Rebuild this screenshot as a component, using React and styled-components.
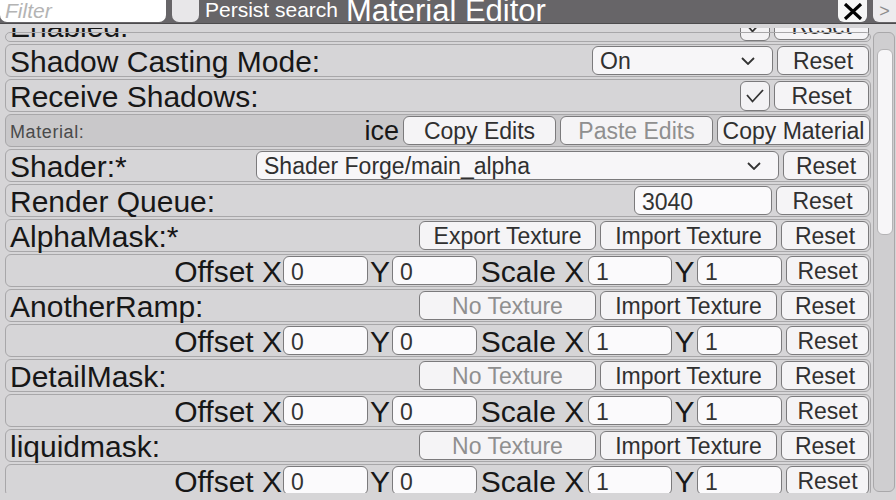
import React from 'react';
import styled, { createGlobalStyle } from 'styled-components';

const GlobalStyle = createGlobalStyle`
  html, body { margin: 0; padding: 0; background: #d6d5d7; }
  body { font-family: "Liberation Sans", Arial, sans-serif; }
  * { box-sizing: border-box; }
`;

const Window = styled.div`
  width: 896px;
  height: 500px;
  overflow: hidden;
  background: #d6d5d7;
  display: flex;
  flex-direction: column;
`;

const TopBar = styled.div`
  height: 24px;
  flex: none;
  background: #676568;
  border-bottom: 1px solid #4c4b4d;
  display: flex;
  align-items: flex-start;
`;

const FilterInput = styled.input`
  width: 166px;
  height: 22px;
  flex: none;
  border: none;
  border-radius: 0 0 7px 7px;
  background: #ffffff;
  padding: 0 0 0 5px;
  margin: 0;
  font: italic 21px "Liberation Sans", Arial, sans-serif;
  color: #333;
  outline: none;
  &::placeholder { color: #b4b4b4; font-style: italic; }
`;

const PersistBox = styled.div`
  width: 27px;
  height: 22px;
  margin-left: 6px;
  flex: none;
  background: #e8e7e9;
  border-radius: 0 0 7px 7px;
`;

const PersistLabel = styled.span`
  margin-left: 6px;
  color: #ffffff;
  font-size: 21px;
  line-height: 19px;
  white-space: nowrap;
`;

const Title = styled.span`
  margin-left: 8px;
  color: #ffffff;
  font-size: 31px;
  line-height: 21px;
  white-space: nowrap;
`;

const Fill = styled.div`
  flex: 1;
`;

const CloseButton = styled.div`
  width: 29px;
  height: 22px;
  flex: none;
  background: #f6f6f6;
  border-radius: 0 0 6px 6px;
  display: flex;
  align-items: center;
  justify-content: center;
  margin-right: 6px;
`;

const MoreButton = styled.div`
  width: 23px;
  height: 22px;
  flex: none;
  background: #edecee;
  border-radius: 0 0 0 6px;
  color: #8c8c8c;
  font-size: 18px;
  display: flex;
  align-items: center;
  justify-content: center;
`;

const Viewport = styled.div`
  height: 465px;
  margin-top: 4px;
  flex: none;
  display: flex;
  align-items: flex-start;
  overflow: hidden;
`;

const List = styled.div`
  flex: 1;
  min-width: 0;
  padding-left: 5px;
  margin-top: -19px;
  display: flex;
  flex-direction: column;
  gap: 2px;
`;

const ScrollCol = styled.div`
  width: 25px;
  height: 100%;
  flex: none;
  padding: 4px 1px 1px 2px;
`;

const Track = styled.div`
  height: 100%;
  border: 1px solid #a9a8aa;
  border-radius: 6px;
  background: #cfced0;
  padding: 16px 0 0 3px;
`;

const Thumb = styled.div`
  width: 16px;
  height: 186px;
  background: #f7f6f8;
  border: 1px solid #b4b3b5;
  border-radius: 6px;
`;

const Row = styled.div`
  position: relative;
  height: 33px;
  flex: none;
  border: 1px solid ${p => (p.$cut ? 'transparent' : '#a8a7a9')};
  border-radius: 6px;
  padding: 0 ${p => p.$pr ?? 1}px 0 4px;
  display: flex;
  align-items: center;
  gap: ${p => p.$gap ?? 4}px;
  background: ${p => (p.$dark ? '#c9c8ca' : 'transparent')};
  ${p =>
    p.$cut &&
    `&::before {
      content: "";
      position: absolute;
      left: -1px;
      right: -1px;
      top: 22px;
      bottom: -1px;
      border: 1px solid #a8a7a9;
      border-radius: 5px;
      pointer-events: none;
    }`}
`;

const Label = styled.span`
  font-size: 30px;
  line-height: 31px;
  padding-top: 1px;
  color: #171717;
  white-space: nowrap;
  margin-right: auto;
`;

const SmallLabel = styled.span`
  font-size: 18px;
  letter-spacing: 0.6px;
  padding-top: 3px;
  color: #4a4a4a;
  white-space: nowrap;
  margin-right: auto;
`;

const BigText = styled.span`
  font-size: ${p => p.$size ?? 30}px;
  line-height: 31px;
  padding-top: 1px;
  color: #171717;
  white-space: nowrap;
  flex: none;
  text-align: center;
  width: ${p => (p.$w ? `${p.$w}px` : 'auto')};
  margin-right: ${p => p.$mr ?? 0}px;
`;

const Button = styled.button`
  width: ${p => p.$w}px;
  height: 29px;
  flex: none;
  margin: 0 0 0 ${p => p.$ml ?? 0}px;
  padding: 2px 0 0 0;
  border: 1px solid #7b7a7c;
  border-radius: 6px;
  background: #f5f4f6;
  font: 23px "Liberation Sans", Arial, sans-serif;
  line-height: 25px;
  color: ${p => (p.$disabled ? '#8f8f8f' : '#303030')};
  text-align: center;
  white-space: nowrap;
`;

const Dropdown = styled.div`
  width: ${p => p.$w}px;
  height: 29px;
  flex: none;
  border: 1px solid #7b7a7c;
  border-radius: 6px;
  background: #f7f6f8;
  display: flex;
  align-items: center;
  justify-content: space-between;
  padding: 2px 17px 0 7px;
  font-size: 23px;
  line-height: 25px;
  color: #303030;
  white-space: nowrap;
`;

const TextField = styled.input`
  width: ${p => p.$w}px;
  height: 29px;
  flex: none;
  margin: 0;
  border: 1px solid #7b7a7c;
  border-radius: 6px;
  background: #fbfafc;
  padding: 3px 0 0 7px;
  font: 23px "Liberation Sans", Arial, sans-serif;
  line-height: 24px;
  color: #333;
  outline: none;
`;

const CheckBox = styled.div`
  width: 30px;
  height: 30px;
  flex: none;
  border: 1px solid #7b7a7c;
  border-radius: 6px;
  background: #f3f2f4;
  display: flex;
  align-items: center;
  justify-content: center;
`;

const Chevron = () => (
  <svg width="14" height="8" viewBox="0 0 14 8" style={{ marginTop: -2 }}>
    <polyline points="1,1 7,7 13,1" fill="none" stroke="#333" strokeWidth="1.8" />
  </svg>
);

const Check = () => (
  <svg width="18" height="14" viewBox="0 0 18 14">
    <polyline points="1,6 6.5,12.5 17,1" fill="none" stroke="#333" strokeWidth="1.8" />
  </svg>
);

const CloseIcon = () => (
  <svg width="20" height="17" viewBox="0 0 20 17">
    <path d="M2 1 L18 16 M18 1 L2 16" stroke="#000" strokeWidth="3.2" strokeLinecap="butt" />
  </svg>
);

const OffsetRow = () => (
  <Row $gap={0}>
    <Fill />
    <BigText $mr={1}>Offset X</BigText>
    <TextField $w={85} readOnly value="0" />
    <BigText $w={24}>Y</BigText>
    <TextField $w={85} readOnly value="0" />
    <BigText $w={111}>Scale X</BigText>
    <TextField $w={84} readOnly value="1" />
    <BigText $w={25}>Y</BigText>
    <TextField $w={85} readOnly value="1" />
    <Button $w={83} $ml={4}>Reset</Button>
  </Row>
);

const TextureRow = ({ name, exportable }) => (
  <Row>
    <Label>{name}</Label>
    <Button $w={177} $disabled={!exportable}>{exportable ? 'Export Texture' : 'No Texture'}</Button>
    <Button $w={177}>Import Texture</Button>
    <Button $w={88}>Reset</Button>
  </Row>
);

export default function App() {
  return (
    <Window>
      <GlobalStyle />
      <TopBar>
        <FilterInput placeholder="Filter" />
        <PersistBox />
        <PersistLabel>Persist search</PersistLabel>
        <Title>Material Editor</Title>
        <Fill />
        <CloseButton><CloseIcon /></CloseButton>
        <MoreButton>&gt;</MoreButton>
      </TopBar>
      <Viewport>
        <List>
          <Row $cut>
            <Label>Enabled:</Label>
            <CheckBox><Check /></CheckBox>
            <Button $w={95}>Reset</Button>
          </Row>
          <Row>
            <Label>Shadow Casting Mode:</Label>
            <Dropdown $w={181}><span>On</span><Chevron /></Dropdown>
            <Button $w={92}>Reset</Button>
          </Row>
          <Row>
            <Label>Receive Shadows:</Label>
            <CheckBox><Check /></CheckBox>
            <Button $w={95}>Reset</Button>
          </Row>
          <Row $dark $pr={0}>
            <SmallLabel>Material:</SmallLabel>
            <BigText $size={27}>ice</BigText>
            <Button $w={153}>Copy Edits</Button>
            <Button $w={153} $disabled>Paste Edits</Button>
            <Button $w={153}>Copy Material</Button>
          </Row>
          <Row>
            <Label>Shader:*</Label>
            <Dropdown $w={523}><span>Shader Forge/main_alpha</span><Chevron /></Dropdown>
            <Button $w={86}>Reset</Button>
          </Row>
          <Row>
            <Label>Render Queue:</Label>
            <TextField $w={138} readOnly value="3040" />
            <Button $w={93}>Reset</Button>
          </Row>
          <TextureRow name="AlphaMask:*" exportable />
          <OffsetRow />
          <TextureRow name="AnotherRamp:" />
          <OffsetRow />
          <TextureRow name="DetailMask:" />
          <OffsetRow />
          <TextureRow name="liquidmask:" />
          <OffsetRow />
        </List>
        <ScrollCol>
          <Track>
            <Thumb />
          </Track>
        </ScrollCol>
      </Viewport>
    </Window>
  );
}
